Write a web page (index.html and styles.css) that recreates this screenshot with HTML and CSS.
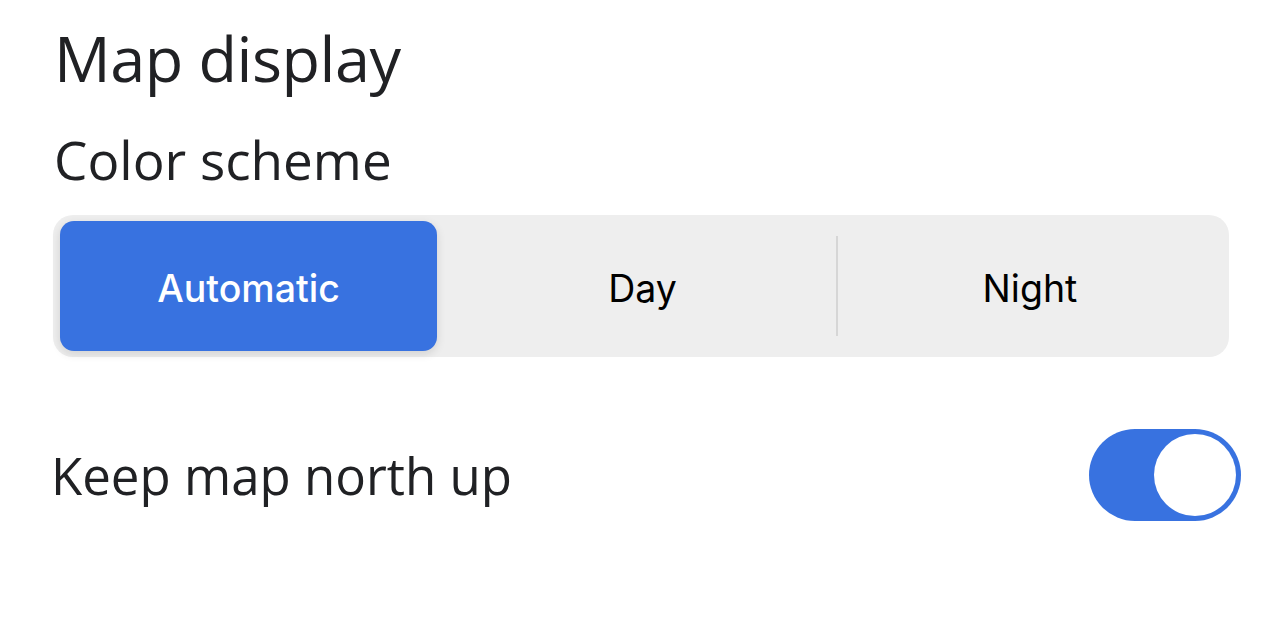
FILE: index.html
```html
<!DOCTYPE html>
<html>
  <head>
    <meta charset="utf-8" />
    <title>Map display</title>
    <link rel="stylesheet" href="styles.css">
  </head>
  <body>
    <div class="page">
      <h1 class="title">Map display</h1>
      <h2 class="subtitle">Color scheme</h2>
      <div class="segmented">
        <div class="seg seg-active">Automatic</div>
        <div class="seg">Day</div>
        <div class="seg seg-last">Night</div>
      </div>
      <div class="row">
        <div class="row-label">Keep map north up</div>
        <div class="toggle on"><span class="knob"></span></div>
      </div>
    </div>
  </body>
</html>
```

FILE: styles.css
```css
* {
  margin: 0;
  padding: 0;
  box-sizing: border-box;
}

body {
  background: #ffffff;
  font-family: "Open Sans", "Liberation Sans", sans-serif;
  color: #202124;
}

.page {
  padding: 18px 39px 0 53px;
}

.title {
  font-size: 63px;
  font-weight: 400;
  line-height: 80px;
  margin-left: 1px;
  letter-spacing: -0.5px;
}

.subtitle {
  font-size: 53px;
  font-weight: 400;
  line-height: 70px;
  margin-top: 27px;
  margin-left: 1px;
}

.segmented {
  margin-top: 20px;
  width: 1176px;
  height: 142px;
  background: #eeeeee;
  border-radius: 20px;
  padding: 6px 7px;
  display: grid;
  grid-template-columns: 387px 391px 1fr;
  font-family: Inter, "Liberation Sans", sans-serif;
  font-size: 37.5px;
  color: #000000;
}

.seg {
  display: flex;
  align-items: center;
  justify-content: center;
  position: relative;
  padding-top: 4px;
}

.seg:nth-child(2)::after {
  content: "";
  position: absolute;
  right: 0;
  top: 15px;
  bottom: 15px;
  width: 2px;
  background: #d6d6d6;
}

.seg-active {
  background: #3872e0;
  color: #ffffff;
  font-weight: 500;
  border-radius: 14px;
  margin-right: 10px;
  box-shadow: 0 3px 10px rgba(0, 0, 0, 0.12);
}

.row {
  margin-top: 72px;
  display: flex;
  align-items: center;
  justify-content: space-between;
}

.row-label {
  font-size: 51px;
  line-height: 92px;
  margin-left: -2px;
}

.toggle {
  width: 152px;
  height: 92px;
  border-radius: 46px;
  background: #3872e0;
  position: relative;
}

.knob {
  position: absolute;
  right: 5px;
  top: 5px;
  width: 82px;
  height: 82px;
  border-radius: 50%;
  background: #ffffff;
}
```
